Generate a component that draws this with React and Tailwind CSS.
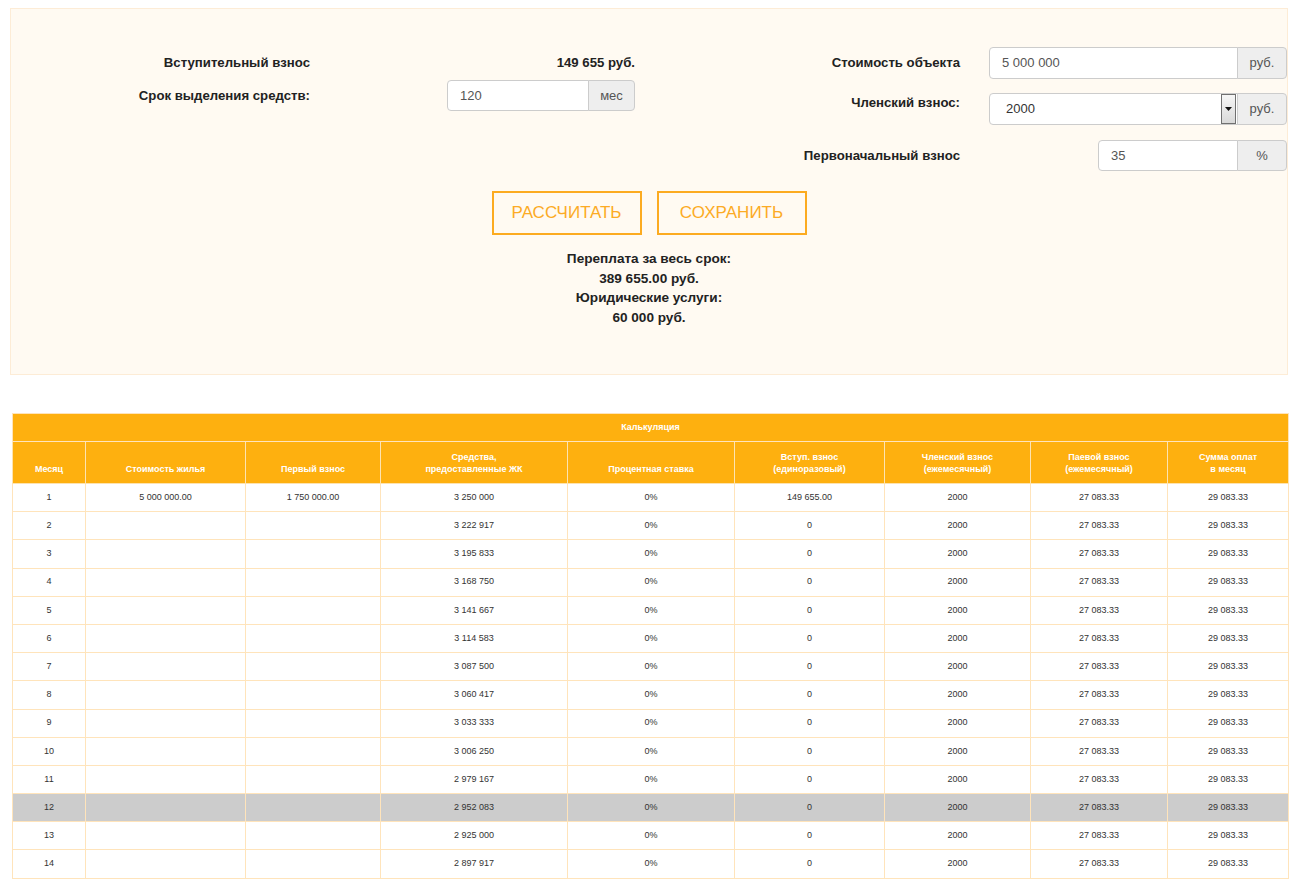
import React from "react";

const font = { fontFamily: '"Liberation Sans", Arial, sans-serif' };

const col4 = [
  "3 250 000", "3 222 917", "3 195 833", "3 168 750", "3 141 667", "3 114 583", "3 087 500",
  "3 060 417", "3 033 333", "3 006 250", "2 979 167", "2 952 083", "2 925 000", "2 897 917",
];

const headers = [
  ["Месяц"],
  ["Стоимость жилья"],
  ["Первый взнос"],
  ["Средства,", "предоставленные ЖК"],
  ["Процентная ставка"],
  ["Вступ. взнос", "(единоразовый)"],
  ["Членский взнос", "(ежемесячный)"],
  ["Паевой взнос", "(ежемесячный)"],
  ["Сумма оплат", "в месяц"],
];

const widths = [73, 160, 135, 187, 167, 150, 146, 137, 121];

function InputGroup({ value, addon, inputW, addonW }) {
  return (
    <div className="flex h-full">
      <div
        className="flex h-full items-center rounded-l-[4px] border border-[#cccccc] bg-white pl-[12px] text-[13px] text-[#555555]"
        style={{ width: inputW }}
      >
        {value}
      </div>
      <div
        className="-ml-px flex h-full items-center justify-center rounded-r-[4px] border border-[#cccccc] bg-[#eeeeee] text-[13px] text-[#555555]"
        style={{ width: addonW }}
      >
        {addon}
      </div>
    </div>
  );
}

export default function App() {
  return (
    <div className="min-h-[893px] bg-white pt-[8px] pb-[12px]" style={font}>
      {/* Top panel */}
      <div className="ml-[10px] mr-[12px] h-[367px] border border-[#fdecd6] bg-[#fffaf2] pt-[38px]">
        <div className="flex">
          {/* Left half */}
          <div className="w-[639px] shrink-0">
            <div className="flex h-[32px] items-center">
              <div className="w-[299px] text-right text-[13.2px] font-bold text-[#222222]">
                Вступительный взнос
              </div>
              <div className="ml-[137px] w-[188px] text-right text-[13.2px] font-bold text-[#222222]">
                149 655 руб.
              </div>
            </div>
            <div className="mt-[1px] flex h-[31px] items-center">
              <div className="w-[299px] text-right text-[13.2px] font-bold text-[#222222]">
                Срок выделения средств:
              </div>
              <div className="ml-[137px] h-[31px] w-[188px]">
                <InputGroup value="120" addon="мес" inputW={142} addonW={47} />
              </div>
            </div>
          </div>
          {/* Right half */}
          <div className="w-[637px] shrink-0">
            <div className="flex h-[32px] items-center">
              <div className="w-[310px] text-right text-[13.2px] font-bold text-[#222222]">
                Стоимость объекта
              </div>
              <div className="ml-[29px] h-[32px] w-[298px]">
                <InputGroup value="5 000 000" addon="руб." inputW={249} addonW={50} />
              </div>
            </div>
            <div className="mt-[14px] flex h-[32px] items-start">
              <div className="w-[310px] pt-[2px] text-right text-[13.2px] font-bold leading-[16px] text-[#222222]">
                Членский взнос:
              </div>
              <div className="ml-[29px] flex h-[32px] w-[298px]">
                <div className="flex h-full w-[249px] items-center justify-between rounded-l-[4px] border border-[#cccccc] bg-white pl-[16px] pr-[1px] text-[13px] text-[#333333]">
                  <span>2000</span>
                  <div className="flex h-[30px] w-[15px] items-center justify-center border border-[#707070] bg-gradient-to-b from-[#f6f6f6] to-[#d9d9d9]">
                    <svg width="7" height="4" viewBox="0 0 7 4">
                      <path d="M0 0 H7 L3.5 4 Z" fill="#111111" />
                    </svg>
                  </div>
                </div>
                <div className="-ml-px flex h-full w-[50px] items-center justify-center rounded-r-[4px] border border-[#cccccc] bg-[#eeeeee] text-[13px] text-[#555555]">
                  руб.
                </div>
              </div>
            </div>
            <div className="mt-[15px] flex h-[31px] items-center">
              <div className="w-[310px] text-right text-[13.2px] font-bold text-[#222222]">
                Первоначальный взнос
              </div>
              <div className="ml-[138px] h-[31px] w-[189px]">
                <InputGroup value="35" addon="%" inputW={140} addonW={50} />
              </div>
            </div>
          </div>
        </div>

        {/* Buttons */}
        <div className="mt-[20px] flex justify-center gap-[15px]">
          <button className="flex h-[44px] w-[150px] items-center justify-center border-2 border-[#fcab20] text-[17px] text-[#fcab25]">
            РАССЧИТАТЬ
          </button>
          <button className="flex h-[44px] w-[150px] items-center justify-center border-2 border-[#fcab20] text-[17px] text-[#fcab25]">
            СОХРАНИТЬ
          </button>
        </div>

        {/* Summary */}
        <div className="mt-[14px] text-center text-[13.6px] font-bold leading-[19.5px] text-[#222222]">
          <div>Переплата за весь срок:</div>
          <div>389 655.00 руб.</div>
          <div>Юридические услуги:</div>
          <div>60 000 руб.</div>
        </div>
      </div>

      {/* Table */}
      <div className="mx-[12px] mt-[38px]">
        <table className="w-[1276px] table-fixed border-collapse">
          <colgroup>
            {widths.map((w, i) => (
              <col key={i} style={{ width: w }} />
            ))}
          </colgroup>
          <thead>
            <tr className="h-[28px]">
              <th
                colSpan={9}
                className="border border-[#ffe4bb] bg-[#feb00f] text-center text-[9px] font-bold text-white"
              >
                Калькуляция
              </th>
            </tr>
            <tr className="h-[42px]">
              {headers.map((h, i) => (
                <th
                  key={i}
                  className="border border-[#fde3b0] bg-[#feb00f] pb-[8px] align-bottom text-center text-[9px] font-bold leading-[12px] text-white"
                >
                  {h.map((l, j) => (
                    <div key={j}>{l}</div>
                  ))}
                </th>
              ))}
            </tr>
          </thead>
          <tbody>
            {col4.map((v, i) => {
              const n = i + 1;
              const cells = [
                String(n),
                n === 1 ? "5 000 000.00" : "",
                n === 1 ? "1 750 000.00" : "",
                v,
                "0%",
                n === 1 ? "149 655.00" : "0",
                "2000",
                "27 083.33",
                "29 083.33",
              ];
              return (
                <tr key={n} className={n === 12 ? "h-[28.2px] bg-[#cccccc]" : "h-[28.2px] bg-white"}>
                  {cells.map((c, j) => (
                    <td
                      key={j}
                      className="border border-[#ffe4bb] text-center align-middle text-[9px] text-[#333333]"
                    >
                      {c}
                    </td>
                  ))}
                </tr>
              );
            })}
          </tbody>
        </table>
      </div>
    </div>
  );
}
